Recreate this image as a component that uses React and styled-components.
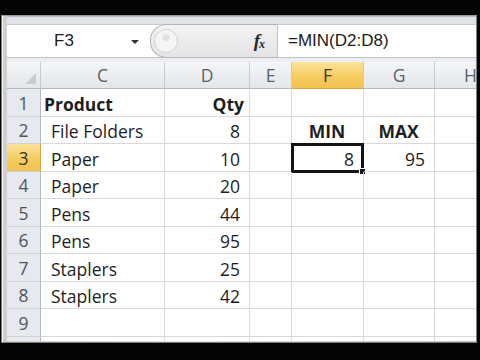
import React from "react";
import styled, { createGlobalStyle, css } from "styled-components";

const Global = createGlobalStyle`
  html, body { margin: 0; padding: 0; background: #000; }
  body { width: 480px; height: 360px; overflow: hidden; }
`;

const Screen = styled.div`
  width: 480px;
  height: 360px;
  background: #050505;
  padding-top: 15px;
  box-sizing: border-box;
`;

const Frame = styled.div`
  margin: 0 3px 0 1px;
  border: 1px solid #7d7d7d;
  border-top-color: #9a9a9a;
  padding: 0 0 1px 5px;
  background: linear-gradient(90deg, #cfcfcf, #e6e6e6 40%, #bdbdbd);
  box-shadow: inset 1px 0 0 #f4f4f4;
`;

const FormulaBar = styled.div`
  background: linear-gradient(#dfe2e6, #eceef1);
  border-top: 1px solid #b8bcc2;
  padding: 7px 0 4px 0;
  display: flex;
  flex-direction: column;
`;

const FormulaRow = styled.div`
  height: 32px;
  display: flex;
  background: #fff;
  border-top: 1px solid #c7cbd1;
  border-bottom: 1px solid #bfc3c9;
`;

const NameBox = styled.div`
  width: 143px;
  display: flex;
  align-items: center;
  padding-left: 47px;
  box-sizing: border-box;
  font-family: "Liberation Sans", Arial, sans-serif;
  font-size: 17px;
  color: #1c1c1c;
  background: #fff;
`;

const Arrow = styled.span`
  margin-left: 57px;
  width: 0;
  height: 0;
  border-left: 4px solid transparent;
  border-right: 4px solid transparent;
  border-top: 4px solid #333;
  margin-top: 2px;
`;

const Pill = styled.div`
  width: 127px;
  box-sizing: border-box;
  display: flex;
  align-items: center;
  justify-content: space-between;
  padding: 0 13px 0 3px;
  background: linear-gradient(#f3f3f3, #e4e4e4);
  border: 1px solid #b4b4b4;
  border-right: none;
  border-radius: 16px 0 0 16px;
  margin: -1px 0;
`;

const Knob = styled.span`
  width: 22px;
  height: 22px;
  border-radius: 50%;
  border: 1px solid #d2d2d2;
  background: radial-gradient(circle at 50% 35%, #e2e2e2 0 3px, #f5f5f5 4px);
`;

const Fx = styled.span`
  font-family: "Liberation Serif", "Times New Roman", serif;
  font-style: italic;
  font-weight: bold;
  font-size: 19px;
  color: #2a2a2a;
  letter-spacing: -1px;
  sub {
    font-size: 12px;
    vertical-align: -1px;
  }
`;

const FormulaInput = styled.div`
  flex: 1;
  display: flex;
  align-items: center;
  padding-left: 10px;
  border-left: 1px solid #c3c3c3;
  font-family: "Liberation Sans", Arial, sans-serif;
  font-size: 17px;
  color: #1c1c1c;
`;

const Grid = styled.div`
  display: grid;
  grid-template-columns: 34px 124px 85px 42px 72px 71px 72px;
  grid-template-rows: 27px repeat(10, 27.5px);
  height: 279px;
  width: 469px;
  overflow: hidden;
  background: #fff;
  font-family: "Open Sans", Lato, sans-serif;
  font-size: 17.5px;
`;

const hot = css`
  background: linear-gradient(#fbe39a, #f5cd62 55%, #f1c04f);
  color: #3a3520;
`;

const ColHead = styled.div`
  display: flex;
  align-items: center;
  justify-content: center;
  background: linear-gradient(#f4f6f8, #e3e6ea);
  border-right: 1px solid #c6cbd2;
  border-bottom: 1px solid #b5bac1;
  color: #5a5f66;
  ${(p) => p.$hot && hot}
  ${(p) => p.$hot && "border-bottom-color: #d9a440;"}
`;

const Corner = styled(ColHead)`
  position: relative;
  &::after {
    content: "";
    position: absolute;
    right: 4px;
    bottom: 4px;
    border-left: 11px solid transparent;
    border-bottom: 11px solid #c9cdd3;
  }
`;

const RowHead = styled.div`
  display: flex;
  align-items: flex-end;
  justify-content: center;
  padding-bottom: 1px;
  box-sizing: border-box;
  background: #e6e9ee;
  border-right: 1px solid #b5bac1;
  border-bottom: 1px solid #cfd3d9;
  color: #50555b;
  ${(p) => p.$hot && hot}
  ${(p) => p.$hot && "border-right-color: #d9a440;"}
`;

const Cell = styled.div`
  position: relative;
  display: flex;
  align-items: flex-end;
  box-sizing: border-box;
  padding: 0 ${(p) => (p.$align === "right" ? 9 : 4)}px 0
    ${(p) => (p.$indent ? 10 : 3)}px;
  justify-content: ${(p) =>
    p.$align === "right" ? "flex-end" : p.$align === "center" ? "center" : "flex-start"};
  border-right: 1px solid #d9d9d9;
  border-bottom: 1px solid #d9d9d9;
  color: #1e1e1e;
  font-weight: ${(p) => (p.$bold ? 700 : 400)};
  white-space: nowrap;
`;

const Active = styled.span`
  position: absolute;
  left: -1px;
  top: -1px;
  right: -1px;
  bottom: -2px;
  border: 3px solid #141414;
  pointer-events: none;
  &::after {
    content: "";
    position: absolute;
    right: -5px;
    bottom: -5px;
    width: 5px;
    height: 5px;
    background: #141414;
    border: 1px solid #fff;
  }
`;

const cols = ["C", "D", "E", "F", "G", "H"];

const rows = [
  [{ t: "Product", b: true }, { t: "Qty", b: true, a: "right", p: 5 }, {}, {}, {}, {}],
  [{ t: "File Folders", i: true }, { t: "8", a: "right" }, {}, { t: "MIN", b: true, a: "center" }, { t: "MAX", b: true, a: "center" }, {}],
  [{ t: "Paper", i: true }, { t: "10", a: "right" }, {}, { t: "8", a: "right", active: true }, { t: "95", a: "right" }, {}],
  [{ t: "Paper", i: true }, { t: "20", a: "right" }, {}, {}, {}, {}],
  [{ t: "Pens", i: true }, { t: "44", a: "right" }, {}, {}, {}, {}],
  [{ t: "Pens", i: true }, { t: "95", a: "right" }, {}, {}, {}, {}],
  [{ t: "Staplers", i: true }, { t: "25", a: "right" }, {}, {}, {}, {}],
  [{ t: "Staplers", i: true }, { t: "42", a: "right" }, {}, {}, {}, {}],
  [{}, {}, {}, {}, {}, {}],
  [{}, {}, {}, {}, {}, {}],
];

export default function App() {
  return (
    <Screen>
      <Global />
      <Frame>
        <FormulaBar>
          <FormulaRow>
            <NameBox>
              F3
              <Arrow />
            </NameBox>
            <Pill>
              <Knob />
              <Fx>
                f<sub>x</sub>
              </Fx>
            </Pill>
            <FormulaInput>=MIN(D2:D8)</FormulaInput>
          </FormulaRow>
        </FormulaBar>
        <Grid>
          <Corner />
          {cols.map((c) => (
            <ColHead key={c} $hot={c === "F"}>
              {c}
            </ColHead>
          ))}
          {rows.map((r, ri) => (
            <React.Fragment key={ri}>
              <RowHead $hot={ri === 2}>{ri < 9 ? ri + 1 : ""}</RowHead>
              {r.map((c, ci) => (
                <Cell
                  key={ci}
                  $bold={c.b}
                  $align={c.a}
                  $indent={c.i}
                  style={c.p ? { paddingRight: c.p } : undefined}
                >
                  {c.t}
                  {c.active && <Active />}
                </Cell>
              ))}
            </React.Fragment>
          ))}
        </Grid>
      </Frame>
    </Screen>
  );
}
